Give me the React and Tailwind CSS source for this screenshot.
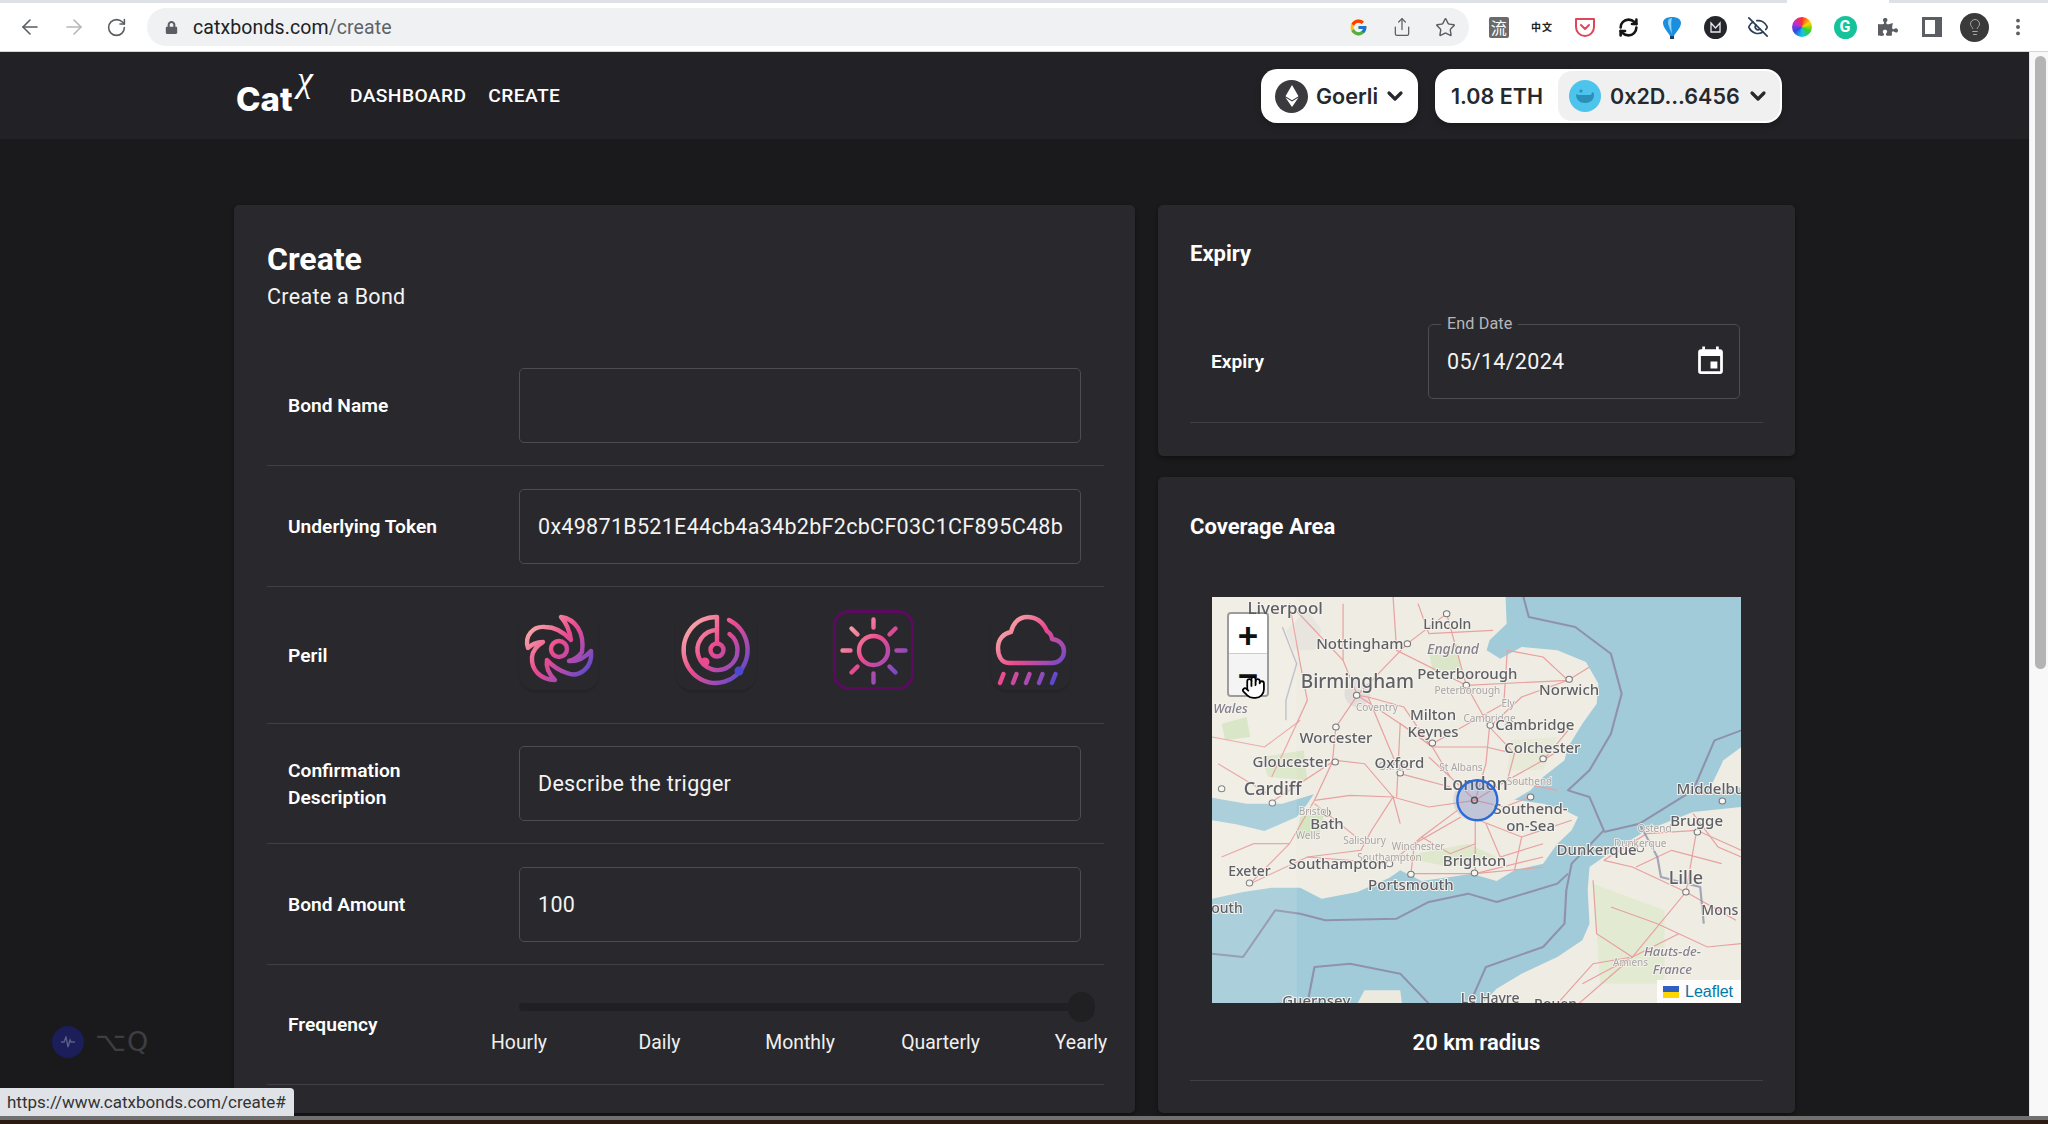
import { ArrowLeft, ArrowRight, RotateCw, Star, Share, EyeOff, RefreshCw, MoreVertical, Hand, Lightbulb, ChevronDown } from 'lucide-react'
import { FcGoogle } from 'react-icons/fc'
import { FaLock, FaPuzzlePiece, FaEthereum } from 'react-icons/fa'
import { MdEvent } from 'react-icons/md'

// ---- toolbar ----
function ExtBox({ children }) {
  return <div className="flex h-[38px] w-[43.3px] shrink-0 items-center justify-center">{children}</div>
}

function BrowserBar() {
  return (
    <div className="relative h-[52px] shrink-0 border-b border-[#d4d5d8] bg-white">
      <div className="flex h-[3px]">
        <div className="w-[1787px] bg-[#dee1e6]" />
        <div className="w-[102px] bg-white" />
        <div className="flex-1 bg-[#dee1e6]" />
      </div>
      <div className="flex h-[43px] items-center pl-[8px] pt-[5px]">
        <div className="flex w-[44px] justify-center"><ArrowLeft size={24} strokeWidth={1.6} className="text-[#5a5d61]" /></div>
        <div className="flex w-[43px] justify-center"><ArrowRight size={24} strokeWidth={1.6} className="text-[#b4b6b9]" /></div>
        <div className="flex w-[43px] justify-center"><RotateCw size={21} strokeWidth={1.8} className="text-[#5a5d61]" /></div>
        <div className="ml-[9px] flex h-[38px] w-[1322px] items-center rounded-full bg-[#eff1f3] pl-[18px] pr-[2px]">
          <FaLock size={13} className="text-[#5a5d61]" />
          <div className="ml-[15px] flex-1 pt-[1px] text-[19.500px] leading-none tracking-[0.1px] text-[#202124]">
            catxbonds.com<span className="text-[#5f6368]">/create</span>
          </div>
          <ExtBox><FcGoogle size={19} /></ExtBox>
          <ExtBox><Share size={20} strokeWidth={1.5} className="text-[#5a5d61]" /></ExtBox>
          <ExtBox><Star size={21} strokeWidth={1.6} className="text-[#5a5d61]" /></ExtBox>
        </div>
        <div className="ml-[8px] flex items-center">
          <ExtBox>
            <div className="flex h-[21px] w-[20px] items-center justify-center rounded-[2px] bg-[#6a6a6a] text-[16px] leading-none text-white [font-family:'Noto_Sans_CJK_SC',sans-serif]">流</div>
          </ExtBox>
          <ExtBox>
            <span className="text-[10px] font-bold leading-none tracking-[1px] text-[#222] [font-family:'Noto_Sans_CJK_SC',sans-serif]">中文</span>
          </ExtBox>
          <ExtBox>
            <svg width="22" height="21" viewBox="0 0 22 21" fill="none" stroke="#e0465a" strokeWidth="2">
              <path d="M2 2h18v8a9 9 0 0 1-18 0z" strokeLinejoin="round" />
              <path d="M7 8l4 4 4-4" strokeLinecap="round" strokeLinejoin="round" />
            </svg>
          </ExtBox>
          <ExtBox><RefreshCw size={21} strokeWidth={3} className="text-[#151515]" /></ExtBox>
          <ExtBox>
            <svg width="20" height="23" viewBox="0 0 20 23">
              <path d="M1 7C1 3 5 1 10 1s9 2 9 6c0 5-6 10-7 13h-4C7 17 1 12 1 7z" fill="#1a8fe0" />
              <path d="M6 6c0-3 2-4 4-4-1 3-1 8 0 16C8 13 6 9 6 6z" fill="#8fd3f7" />
              <rect x="8" y="20" width="4" height="3" fill="#1c3f66" />
            </svg>
          </ExtBox>
          <ExtBox>
            <svg width="23" height="23" viewBox="0 0 23 23">
              <circle cx="11.5" cy="11.5" r="11.5" fill="#24262b" />
              <path d="M7 7l4.5 5L16 7v9H7z" fill="none" stroke="#e9e9ee" strokeWidth="1.3" />
            </svg>
          </ExtBox>
          <ExtBox><EyeOff size={22} strokeWidth={1.8} className="text-[#2a3c58]" /></ExtBox>
          <ExtBox>
            <div className="h-[20px] w-[20px] rounded-full bg-[conic-gradient(#ff2d2d,#ffd400,#2fd12f,#17c4e6,#2a4be0,#c22fd1,#ff2d2d)]" />
          </ExtBox>
          <ExtBox>
            <div className="flex h-[23px] w-[23px] items-center justify-center rounded-full bg-[#15c39a] text-[16px] font-bold leading-none text-white">G</div>
          </ExtBox>
          <ExtBox><FaPuzzlePiece size={20} className="text-[#5a5d61]" /></ExtBox>
          <ExtBox><div className="h-[20px] w-[20px] border-[3px] border-r-[7px] border-[#5a5d61]" /></ExtBox>
          <ExtBox>
            <div className="flex h-[29px] w-[29px] items-center justify-center rounded-full bg-[#3a3a3a]">
              <Lightbulb size={18} strokeWidth={1.2} className="text-[#b5b5b5]" />
            </div>
          </ExtBox>
          <ExtBox><MoreVertical size={22} strokeWidth={2.2} className="text-[#5a5d61]" /></ExtBox>
        </div>
      </div>
    </div>
  )
}

// ---- app header ----
function AppHeader() {
  return (
    <header className="flex h-[87px] shrink-0 items-center justify-between bg-[#222226] pl-[235px] pr-[247px] pt-[1px]">
      <div className="flex items-center">
        <div className="relative h-[60px] w-[115px]">
          <span className="absolute left-[1px] top-[15px] text-[33px] font-extrabold leading-[36px] text-white [font-family:Inter,sans-serif]">Cat</span>
          <span className="absolute left-[62px] top-[-7px] text-[36px] italic leading-[40px] text-white [font-family:'Liberation_Serif',serif]">χ</span>
        </div>
        <nav className="flex items-center gap-[22px] pt-[1px] text-[19.200px] font-medium tracking-[0.4px] text-white">
          <a>DASHBOARD</a>
          <a>CREATE</a>
        </nav>
      </div>
      <div className="flex items-center gap-[17px] text-[21.500px] font-semibold text-[#25292e] [font-family:Inter,sans-serif]">
        <div className="flex h-[54px] w-[157px] items-center rounded-[16px] bg-white pl-[14px] shadow-[0_3px_6px_rgba(0,0,0,0.25)]">
          <div className="flex h-[33px] w-[33px] items-center justify-center rounded-full bg-[#3b3b3f]">
            <FaEthereum size={22} className="text-white" />
          </div>
          <span className="ml-[8px]">Goerli</span>
          <ChevronDown size={24} strokeWidth={3.2} className="ml-[5px]" />
        </div>
        <div className="flex h-[54px] w-[347px] items-center rounded-[16px] bg-white pl-[16px] pr-[2px] shadow-[0_3px_6px_rgba(0,0,0,0.25)]">
          <span className="w-[107px]">1.08 ETH</span>
          <div className="flex h-[50px] flex-1 items-center rounded-[14px] bg-[#f0f0f0] pl-[11px]">
            <div className="flex h-[32px] w-[32px] items-center justify-center rounded-full bg-[#4cc4ec] text-[14px]">
              <svg width="22" height="16" viewBox="0 0 22 16" fill="#2b8fb8">
                <path d="M2 6c0 6 4 9 9 9s9-3 9-8c0-2-1-3-2-3 0 2-1 3-2 3H7C5 7 3 7 2 6z" />
                <circle cx="7" cy="3" r="1.6" />
              </svg>
            </div>
            <span className="ml-[9px]">0x2D...6456</span>
            <ChevronDown size={24} strokeWidth={3.2} className="ml-[6px]" />
          </div>
        </div>
      </div>
    </header>
  )
}

// ---- peril icons ----
const STROKE = { fill: 'none', strokeWidth: 4.4, strokeLinecap: 'round', strokeLinejoin: 'round' }

function PerilDefs({ id }) {
  return (
    <defs>
      <linearGradient id={id} gradientUnits="userSpaceOnUse" x1="10" y1="12" x2="72" y2="66">
        <stop offset="0" stopColor="#f7b4ac" />
        <stop offset="0.45" stopColor="#ec4a8e" />
        <stop offset="0.75" stopColor="#a04bb4" />
        <stop offset="1" stopColor="#4c49d0" />
      </linearGradient>
    </defs>
  )
}

function CycloneIcon() {
  return (
    <svg width="80" height="80" viewBox="0 0 80 80">
      <PerilDefs id="gc" />
      <g stroke="url(#gc)" {...STROKE}>
        <circle cx="40" cy="39" r="8" />
        <path d="M42 7C56 9 66 22 63 42Q58 49 50 51Q62 52 72 41C74 58 60 68 48 63Q36 59 28 50Q26 60 36 70C22 70 12 60 13 47Q14 38 24 32Q15 32 9 38C5 26 14 16 26 17Q40 17 52 30Q50 16 42 7Z" />
      </g>
    </svg>
  )
}

function RadarIcon() {
  return (
    <svg width="80" height="80" viewBox="0 0 80 80">
      <PerilDefs id="gr" />
      <g stroke="url(#gr)" {...STROKE}>
        <path d="M53 10A32 33 0 1 1 41 7V33" />
        <path d="M53.500 24A20 20 0 1 1 41 20" />
        <circle cx="41" cy="40" r="6.500" />
      </g>
      <circle cx="29" cy="52" r="4.500" fill="#ec4a8e" />
      <circle cx="63" cy="61" r="4.500" fill="#4c49d0" />
    </svg>
  )
}

function SunIcon() {
  return (
    <svg width="75" height="75" viewBox="2.500 2.500 75 75">
      <PerilDefs id="gs" />
      <g stroke="url(#gs)" {...STROKE}>
        <circle cx="40" cy="40" r="14.500" />
        <path d="M40 9V17M40 63V72M9 40H17M63 40H72M18 18L24 24M62 18L56 24M18 62L24 56M62 62L56 56" />
      </g>
    </svg>
  )
}

function CloudIcon() {
  return (
    <svg width="80" height="80" viewBox="0 0 80 80">
      <PerilDefs id="gk" />
      <g stroke="url(#gk)" {...STROKE}>
        <path d="M18 53C10 53 7 45 7 38C7 29 13 23 20 22C22 13 28 7 36 7C45 7 52 12 56 21C60 24 61 26 61 29C68 30 73 34 73 41C73 48 68 53 61 53Z" />
        <path d="M12.500 64L9 73M25.500 64L22 73M38.500 64L35 73M51.500 64L48 73M64.500 64L61 73" />
      </g>
    </svg>
  )
}

// ---- map ----
// coordinates for shapes were read from a 2.8x / 3x crop, hence the scale on the group
const toX = (z) => z / 2.8 - 11.8
const toY = (z) => z / 3 - 6.7

const ROADS = [
  'M770 630L700 560 650 470 560 400 440 315',
  'M770 630L640 650 540 620 420 615 320 630',
  'M770 630L800 520 810 410 745 285 690 70',
  'M770 630L860 570 960 510 1030 420',
  'M770 630L850 650 925 620',
  'M770 690L770 850',
  'M720 660L620 740 530 820',
  'M700 590L560 550 470 320',
  'M730 680L600 760 590 850',
  'M780 690L900 740 1040 690',
  'M440 315L400 210 250 40',
  'M440 315L580 160 690 70',
  'M440 315L380 410 370 515 320 630',
  'M320 630L250 760 140 880',
  'M745 285L1030 270',
  'M810 410L900 320 1030 270',
  'M860 570L880 490 810 410',
  'M530 820L300 800 140 880',
  'M590 850L770 850 960 800',
  'M370 515L200 635',
  'M540 20L550 180 745 285',
  'M400 210L400 40',
  'M1130 810L1210 830 1360 905 1500 990',
  'M1360 905L1210 1100 1070 1180',
  'M1210 1100L1060 1240',
  'M1390 720L1360 905',
  'M1130 810L1250 730 1390 720 1515 780',
  'M1100 870L1110 1030 1210 1100 1340 1030',
  'M640 460L560 400 550 620',
  'M770 850L960 830',
  'M650 460L850 340 860 180',
  'M440 315L470 320 570 350 640 460',
  'M250 40L280 220 300 330 240 470 200 560',
  'M610 40L640 130 820 120',
  'M560 700L540 620 480 720 450 780 300 800',
  'M460 760L320 640',
  'M860 570L1000 600',
  'M800 700L840 800 960 760',
  'M900 740L880 840',
  'M620 740L700 790 770 760',
  'M540 620L460 520 380 510',
  'M650 470L800 470 880 490',
  'M700 560L640 500',
  'M1030 270L1090 230',
  'M960 510L1020 470',
  'M860 180L960 200 1030 270',
  'M1220 830L1320 780 1460 820',
  'M1280 1000L1420 1070 1515 1060',
  'M1150 950L1280 1000',
  'M1000 1240L1100 1120 1210 1100',
  'M1380 670L1450 770 1515 800',
  'M50 520L190 610',
  'M60 800L150 760 250 760',
  'M33 440L180 470 280 390',
]

const MAP_LABELS = [
  ['Liverpool', 238, 70, 17],
  ['Birmingham', 440, 292, 19],
  ['Nottingham', 447, 175, 15],
  ['Lincoln', 692, 115, 14],
  ['England', 708, 192, 14, 'i'],
  ['Peterborough', 748, 267, 15],
  ['Norwich', 1033, 314, 15],
  ['Wales', 85, 368, 13, 'i'],
  ['Milton', 652, 388, 15],
  ['Keynes', 652, 440, 15],
  ['Cambridge', 937, 420, 15],
  ['Worcester', 380, 457, 15],
  ['Colchester', 958, 488, 15],
  ['Gloucester', 255, 530, 15],
  ['Oxford', 558, 533, 15],
  ['Cardiff', 203, 615, 18],
  ['London', 770, 600, 18],
  ['Southend-', 925, 670, 15],
  ['on-Sea', 925, 722, 15],
  ['Middelburg', 1450, 612, 15],
  ['Bath', 355, 717, 15],
  ['Brugge', 1390, 707, 15],
  ['Dunkerque', 1110, 795, 15],
  ['Exeter', 138, 858, 14],
  ['Southampton', 385, 837, 15],
  ['Brighton', 768, 828, 15],
  ['Portsmouth', 590, 900, 15],
  ['Lille', 1360, 880, 18],
  ['Mons', 1455, 975, 14],
  ['outh', 75, 968, 14],
  ['Hauts-de-', 1322, 1098, 13, 'i'],
  ['France', 1322, 1150, 13, 'i'],
  ['Guernsey', 325, 1248, 15],
  ['Le Havre', 812, 1238, 14],
  ['Rouen', 995, 1256, 14],
]

const SMALL_LABELS = [
  ['Bristol', 318, 675], ['Wells', 302, 747], ['Salisbury', 460, 760], ['Winchester', 610, 778],
  ['Southampton', 530, 812], ['Coventry', 495, 362], ['Peterborough', 748, 310], ['Ely', 862, 350],
  ['Cambridge', 810, 395], ['Ostend', 1272, 726], ['Southend', 922, 585], ['Dunkerque', 1232, 770],
  ['St Albans', 730, 542], ['Amiens', 1205, 1128], ['Oxford', 545, 540],
]

const CITY_DOTS = [
  [690, 70], [580, 160], [1033, 267], [745, 285], [438, 315], [380, 410], [812, 405], [650, 458],
  [378, 515], [960, 505], [560, 548], [202, 638], [355, 668], [925, 620], [530, 820], [590, 852],
  [768, 848], [138, 878], [1232, 775], [1360, 905], [1462, 632], [1392, 725], [60, 595],
]

function MapCanvas() {
  return (
    <svg width="529" height="406" viewBox="0 0 529 406" className="block blur-[0.35px]">
      <rect width="529" height="406" fill="#a2cbd9" />
      <g transform="scale(0.35714 0.33333) translate(-33 -20)">
        {/* Great Britain */}
        <path fill="#efede3" d="M33 20H855L858 100 810 150 802 180 840 205 900 170 1000 180 1080 215 1115 280 1110 340 1070 400 1030 470 1020 510 960 560 925 600 880 628 960 640 1020 660 1058 680 1040 720 1000 760 960 820 880 840 830 872 760 850 700 860 620 872 560 840 530 862 440 905 340 925 280 892 200 892 120 905 33 925V690L100 702 180 722 270 680 300 640 318 612 230 640 130 640 33 622Z" />
        {/* Continent */}
        <path fill="#efede3" d="M1515 650L1380 665 1250 720 1130 800 1090 830 1085 900 1090 1000 1070 1050 1000 1100 900 1150 830 1195 790 1240H1515Z" />
        <path fill="#efede3" d="M1515 470L1465 510 1420 610 1515 590Z" />
        <path fill="#eceadf" d="M440 1240L460 1200 560 1200 565 1240Z" />
        {/* Green patches */}
        <path fill="#d5e5c2" d="M60 400L130 380 140 440 70 450Z" />
        <path fill="#dbe6c8" d="M170 500L290 480 300 570 190 560Z" />
        <path fill="#d5e5c2" d="M280 680L350 660 330 750 270 740Z" />
        <path fill="#dfe8cd" d="M560 800L750 760 830 800 700 830Z" />
        <path fill="#dbe6c8" d="M640 180L720 160 730 240 650 240Z" />
        <path fill="#d9e7c6" d="M1100 880L1300 960 1300 1180 1120 1180Z" opacity="0.6" />
        <path fill="#dfe8cd" d="M870 450L1000 440 960 540 860 540Z" opacity="0.6" />
        <path fill="#e6e1dc" d="M240 120L300 60 340 120 320 180 260 180Z" opacity="0.7" />
        {/* Urban */}
        <ellipse cx="770" cy="630" rx="62" ry="62" fill="#ddd8d6" />
        <ellipse cx="440" cy="310" rx="36" ry="40" fill="#e2dcda" />
        {/* Roads */}
        <g fill="none" stroke="#e8a0a0" strokeWidth="3.4">
          {ROADS.map((d) => <path key={d} d={d} />)}
        </g>
        {/* Boundaries */}
        <g fill="none" stroke="#8f93aa" strokeWidth="6" strokeLinejoin="round">
          <path d="M905 20L920 80 1050 110 1150 190 1180 310 1150 430 1090 540 1030 600 1090 620 1130 720 1040 820 1025 900 1020 1000 960 1070 800 1130 755 1240" />
          <path d="M33 1090L120 1100 210 960 280 970 350 990 550 985 640 935 750 910 830 935 1000 880 1030 850" />
          <path d="M210 1240L300 1240 320 1130 420 1120 560 1150 640 1240" />
          <path d="M1515 420L1440 450 1380 600 1230 700 1130 725" />
          <path d="M1230 700L1280 800 1290 860 1400 890 1410 1000" opacity="0.8" />
        </g>
        <path fill="none" stroke="#b9bcc9" strokeWidth="4" d="M230 110L270 220 240 330 240 390" />
        {/* City markers */}
        <g fill="#f6f5f1" stroke="#777" strokeWidth="3">
          {CITY_DOTS.map(([cx, cy]) => <circle key={`${cx}-${cy}`} cx={cx} cy={cy} r="9" />)}
        </g>
        {/* lighter tile column on the left */}
        <rect x="33" y="20" width="237" height="1220" fill="#ffffff" opacity="0.1" />
      </g>
      <g style={{ fontFamily: '"Noto Sans", sans-serif', paintOrder: 'stroke' }} textAnchor="middle" fontSize="10" fill="#a8a4a4" stroke="#f4f2ec" strokeWidth="1.5">
        {SMALL_LABELS.map(([t, x, y]) => <text key={t + x} x={toX(x)} y={toY(y)}>{t}</text>)}
      </g>
      <g style={{ fontFamily: '"Noto Sans", sans-serif', paintOrder: 'stroke' }} textAnchor="middle" fill="#5f5f66" stroke="#f4f2ec" strokeWidth="2" fontWeight="500">
        {MAP_LABELS.map(([t, x, y, s, i]) => (
          <text key={t + x} x={toX(x)} y={toY(y)} fontSize={s} fontStyle={i ? 'italic' : 'normal'} fill={i ? '#86808f' : '#5f5f66'}>{t}</text>
        ))}
      </g>
      <circle cx={toX(776)} cy={toY(630)} r="20" fill="#3f6fe0" fillOpacity="0.18" stroke="#2b6ad8" strokeWidth="2.4" />
      <circle cx={toX(768)} cy={toY(630)} r="3" fill="none" stroke="#555" strokeWidth="1.4" />
    </svg>
  )
}

function CoverageMap() {
  return (
    <div className="relative ml-[22px] h-[406px] w-[529px] overflow-hidden">
      <MapCanvas />
      <div className="absolute left-[15px] top-[15px] w-[42px] rounded-[4px] border-2 border-[rgba(90,90,90,0.55)] [font-family:'Liberation_Sans',sans-serif]">
        <div className="flex h-[40px] items-center justify-center rounded-t-[3px] border-b border-[#ccc] bg-white pt-[3px] text-[35px] font-bold leading-none text-[#111]">+</div>
        <div className="flex h-[41px] items-center justify-center rounded-b-[3px] bg-[#f4f4f4] pt-[2px] text-[35px] font-bold leading-none text-[#111]">−</div>
        <Hand size={25} strokeWidth={1.7} className="absolute left-[12px] top-[61px] fill-white text-black" />
      </div>
      <div className="absolute bottom-0 right-0 flex h-[23px] w-[84px] items-center bg-white/85 pl-[6px] text-[16px] leading-none text-[#0078a8] [font-family:'Liberation_Sans',sans-serif]">
        <div className="mr-[6px] w-[16px]">
          <div className="h-[6px] bg-[#2f5fc0]" />
          <div className="h-[6px] bg-[#ffd500]" />
        </div>
        Leaflet
      </div>
    </div>
  )
}

// ---- form ----
function Row({ label, children }) {
  return (
    <div className="flex items-center border-b border-[#3f3f44] pl-[21px]">
      <div className="w-[231px] shrink-0 text-[19.200px] font-semibold leading-[27px] text-white">{label}</div>
      <div className="w-[562px] shrink-0">{children}</div>
    </div>
  )
}

function TextBox({ tight, children }) {
  return (
    <div className={tight ? 'mb-[22px] mt-[22px]' : 'mb-[22px] mt-[23px]'}>
      <div className="flex h-[75px] items-center rounded-[5px] border border-[#4c4c52] px-[18px] pt-[2px] text-[21.500px] tracking-[0.3px] text-[#f3f3f3]">
        {children}
      </div>
    </div>
  )
}

const FREQUENCIES = ['Hourly', 'Daily', 'Monthly', 'Quarterly', 'Yearly']

function FrequencySlider() {
  return (
    <div className="h-[119px] pt-[38px]">
      <div className="relative h-[8px] rounded-full bg-[#202023]">
        <div className="absolute -top-[11px] right-[-14px] h-[30px] w-[27px] rounded-full bg-[#202023]" />
      </div>
      <div className="mt-[18px] flex justify-between text-[19.400px] leading-[27px] text-[#f0f0f0]">
        {FREQUENCIES.map((f) => (
          <div key={f} className="flex w-0 justify-center whitespace-nowrap">{f}</div>
        ))}
      </div>
    </div>
  )
}

function PerilTile({ selected, children }) {
  return (
    <div
      className={
        selected
          ? 'flex h-[80px] w-[81px] items-center justify-center rounded-2xl border-[3px] border-[#5c0a60]'
          : 'flex h-[80px] w-[80px] items-center justify-center rounded-2xl shadow-[0_2px_2px_rgba(0,0,0,0.13)]'
      }
    >
      {children}
    </div>
  )
}

function CreateCard() {
  return (
    <section className="w-[901px] shrink-0 rounded-[5px] bg-[#29292d] pl-[33px] pr-[31px] pt-[37px] shadow-[0_2px_4px_rgba(0,0,0,0.4)]">
      <h1 className="text-[32px] font-bold leading-[34px] text-white">Create</h1>
      <p className="mt-[7px] text-[21.500px] leading-[28px] tracking-[0.3px] text-[#f3f3f3]">Create a Bond</p>
      <div className="mt-[34px]">
        <Row label="Bond Name"><TextBox /></Row>
        <Row label="Underlying Token"><TextBox>0x49871B521E44cb4a34b2bF2cbCF03C1CF895C48b</TextBox></Row>
        <Row label="Peril">
          <div className="pb-[33px] pt-[23px]">
            <div className="flex gap-[77px]">
              <PerilTile><CycloneIcon /></PerilTile>
              <PerilTile><RadarIcon /></PerilTile>
              <PerilTile selected><SunIcon /></PerilTile>
              <PerilTile><CloudIcon /></PerilTile>
            </div>
          </div>
        </Row>
        <Row label={<>Confirmation<br />Description</>}><TextBox tight>Describe the trigger</TextBox></Row>
        <Row label="Bond Amount"><TextBox>100</TextBox></Row>
        <Row label="Frequency"><FrequencySlider /></Row>
      </div>
    </section>
  )
}

function SideCards() {
  return (
    <div className="flex w-[637px] shrink-0 flex-col gap-[21px]">
      <section className="h-[251px] rounded-[5px] bg-[#29292d] px-[32px] pt-[35px] shadow-[0_2px_4px_rgba(0,0,0,0.4)]">
        <h2 className="text-[22px] font-bold leading-[28px] text-white">Expiry</h2>
        <div className="mt-[56px] flex items-center border-b border-[#3f3f44] pb-[23px] pl-[21px]">
          <div className="w-[217px] pt-[1px] text-[19.200px] font-semibold text-white">Expiry</div>
          <div className="relative flex h-[75px] w-[312px] items-center justify-between rounded-[5px] border border-[#4c4c52] pl-[18px] pr-[12px] text-[21.500px] tracking-[0.3px] text-[#f3f3f3]">
            <span className="absolute -top-[11px] left-[12px] bg-[#29292d] px-[6px] text-[16.200px] leading-[20px] tracking-[0.1px] text-[#b6b6ba]">End Date</span>
            <span className="pt-[2px]">05/14/2024</span>
            <MdEvent size={33} className="text-white" />
          </div>
        </div>
      </section>
      <section className="h-[636px] rounded-[5px] bg-[#29292d] px-[32px] pt-[36px] shadow-[0_2px_4px_rgba(0,0,0,0.4)]">
        <h2 className="text-[22px] font-bold leading-[28px] text-white">Coverage Area</h2>
        <div className="mt-[56px]"><CoverageMap /></div>
        <div className="mt-[26px] border-b border-[#3f3f44] pb-[23px] text-center text-[22px] font-semibold leading-[28px] text-white">20 km radius</div>
      </section>
    </div>
  )
}

export default function App() {
  return (
    <div className="relative flex h-screen w-screen flex-col overflow-hidden bg-[#1a1a1c] [font-family:Roboto,sans-serif]">
      <BrowserBar />
      <div className="flex min-h-0 flex-1">
        <main className="flex min-w-0 flex-1 flex-col overflow-hidden">
          <AppHeader />
          <div className="flex gap-[23px] pl-[234px] pt-[66px]">
            <CreateCard />
            <SideCards />
          </div>
        </main>
        <div className="w-[19px] shrink-0 border-l border-[#e4e4e6] bg-[#f8f8f8] pl-[5px] pt-[4px]">
          <div className="h-[613px] w-[11px] rounded-full bg-[#b4b4b4]" />
        </div>
      </div>
      <div className="flex h-[8px] shrink-0 flex-col">
        <div className="h-[4px] bg-[#707070]" />
        <div className="h-[4px] bg-[#2a1a12]" />
      </div>

      {/* overlays */}
      <div className="absolute left-[52px] top-[1026px] flex h-[32px] w-[32px] items-center justify-center rounded-full bg-[#1b1e58]">
        <svg width="16" height="12" viewBox="0 0 16 12" fill="none" stroke="#5a5e88" strokeWidth="1.4"><path d="M1 6h3l2-5 2 10 2-7 1 2h4" /></svg>
      </div>
      <div className="absolute left-[95px] top-[1024px] text-[27px] leading-[36px] tracking-[1px] text-[#3e3e40] [font-family:'DejaVu_Sans',sans-serif]">⌥Q</div>
      <div className="absolute left-0 top-[1088px] flex h-[28px] w-[294px] items-center rounded-tr-[4px] bg-[#dfe2e6] pl-[7px] text-[17px] leading-none text-[#333]">
        https://www.catxbonds.com/create#
      </div>
    </div>
  )
}
